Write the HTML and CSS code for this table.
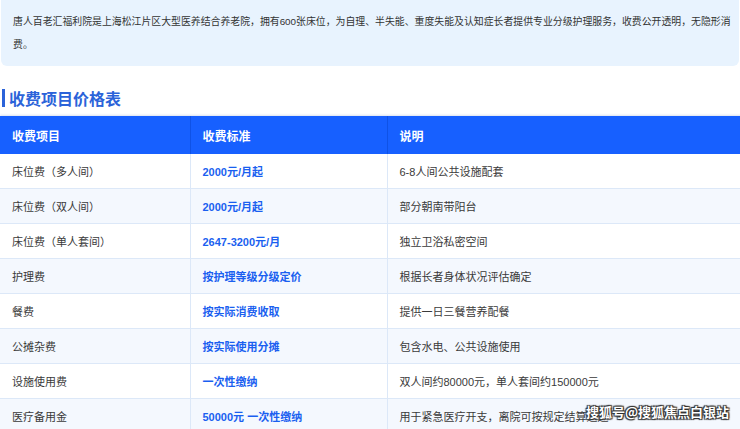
FILE: index.html
```html
<!DOCTYPE html>
<html lang="zh">
<head>
<meta charset="utf-8">
<link rel="stylesheet" href="styles.css">
</head>
<body>
<div class="page">
  <div class="intro">唐人百老汇福利院是上海松江片区大型医养结合养老院，拥有600张床位，为自理、半失能、重度失能及认知症长者提供专业分级护理服务，收费公开透明，无隐形消费。</div>
  <h2 class="title"><span class="bar"></span>收费项目价格表</h2>
  <table class="fees">
    <colgroup><col class="c1"><col class="c2"><col class="c3"></colgroup>
    <thead>
      <tr><th>收费项目</th><th>收费标准</th><th>说明</th></tr>
    </thead>
    <tbody>
      <tr><td>床位费（多人间）</td><td class="price">2000元/月起</td><td>6-8人间公共设施配套</td></tr>
      <tr><td>床位费（双人间）</td><td class="price">2000元/月起</td><td>部分朝南带阳台</td></tr>
      <tr><td>床位费（单人套间）</td><td class="price">2647-3200元/月</td><td>独立卫浴私密空间</td></tr>
      <tr><td>护理费</td><td class="price">按护理等级分级定价</td><td>根据长者身体状况评估确定</td></tr>
      <tr><td>餐费</td><td class="price">按实际消费收取</td><td>提供一日三餐营养配餐</td></tr>
      <tr><td>公摊杂费</td><td class="price">按实际使用分摊</td><td>包含水电、公共设施使用</td></tr>
      <tr><td>设施使用费</td><td class="price">一次性缴纳</td><td>双人间约80000元，单人套间约150000元</td></tr>
      <tr><td>医疗备用金</td><td class="price">50000元 一次性缴纳</td><td>用于紧急医疗开支，离院可按规定结算退还</td></tr>
    </tbody>
  </table>
  <div class="watermark">搜狐号@搜狐焦点白银站</div>
</div>
</body>
</html>
```

FILE: styles.css
```css
html, body {
  margin: 0;
  padding: 0;
  background: #ffffff;
}
body {
  font-family: "Liberation Sans", "Noto Sans CJK SC", sans-serif;
  color: #333333;
  overflow: hidden;
}
.page {
  position: relative;
  width: 740px;
  height: 429px;
  overflow: hidden;
}
.intro {
  margin: 0 1px 0 1px;
  padding: 10px 4px 10px 12px;
  height: 46px;
  background: #e8f3fe;
  border-radius: 0 0 6px 6px;
  font-size: 9.9px;
  line-height: 23px;
  color: #333333;
}
.title {
  display: flex;
  align-items: center;
  gap: 4px;
  margin: 21px 0 0 0;
  height: 22px;
  font-size: 16px;
  font-weight: bold;
  color: #2b63d9;
}
.bar {
  display: block;
  width: 3px;
  height: 18px;
  margin-left: 2px;
  background: #2b63d9;
}
.fees {
  margin-top: 7px;
  width: 742px;
  border-collapse: collapse;
  table-layout: fixed;
  box-shadow: 0 -1px 2px rgba(150, 170, 210, 0.35);
}
.c1 { width: 190px; }
.c2 { width: 197px; }
.fees th {
  height: 38px;
  padding: 0 0 0 12px;
  background: #1760ff;
  color: #ffffff;
  font-size: 12px;
  font-weight: bold;
  text-align: left;
  border-left: 1px solid #0f52e6;
}
.fees th:first-child { border-left: none; }
.fees td {
  height: 34px;
  padding: 0 0 0 12px;
  font-size: 11px;
  color: #3a3a3a;
  border-left: 1px solid #dce8f8;
  border-bottom: 1px solid #dce8f8;
  white-space: nowrap;
  overflow: hidden;
}
.fees td:first-child { border-left: none; }
.fees tbody tr:nth-child(even) td { background: #f4f8fe; }
.fees td.price {
  color: #1a5ff0;
  font-weight: bold;
}
.watermark {
  position: absolute;
  left: 586px;
  top: 403px;
  font-size: 13px;
  line-height: 17px;
  color: #ffffff;
  font-family: "Noto Sans CJK SC", sans-serif;
  font-weight: bold;
  text-shadow: 0 0 1px #222, 1px 1px 1px #333, -1px -1px 1px #333, 1px -1px 1px #333, -1px 1px 1px #333;
  white-space: nowrap;
}
```
